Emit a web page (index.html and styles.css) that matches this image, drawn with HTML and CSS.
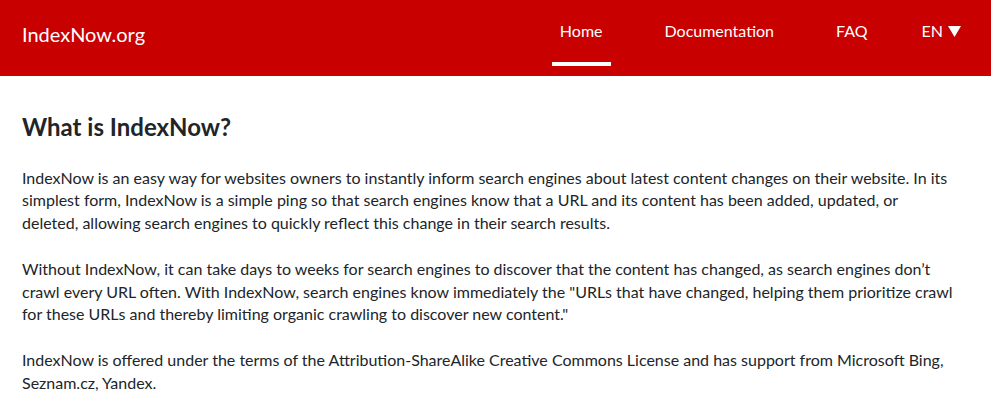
FILE: index.html
```html
<!DOCTYPE html>
<html lang="en">
<head>
<meta charset="utf-8">
<title>IndexNow.org</title>
<link rel="stylesheet" href="styles.css">
</head>
<body>
<header class="topbar">
  <a class="brand" href="#">IndexNow.org</a>
  <nav class="nav">
    <a class="nav-item active" href="#">Home</a>
    <a class="nav-item" href="#">Documentation</a>
    <a class="nav-item" href="#">FAQ</a>
    <a class="nav-item lang" href="#">EN<svg class="caret" width="13" height="11" viewBox="0 0 13 11" aria-hidden="true"><polygon points="0,0 13,0 6.5,11" fill="#fff"/></svg></a>
  </nav>
</header>
<main class="content">
  <h1 class="title">What is IndexNow?</h1>
  <p>IndexNow is an easy way for websites owners to instantly inform search engines about latest content changes on their website. In its simplest form, IndexNow is a simple ping so that search engines know that a URL and its content has been added, updated, or<br>deleted, allowing search engines to quickly reflect this change in their search results.</p>
  <p>Without IndexNow, it can take days to weeks for search engines to discover that the content has changed, as search engines don’t crawl every URL often. With IndexNow, search engines know immediately the "URLs that have changed, helping them prioritize crawl for these URLs and thereby limiting organic crawling to discover new content."</p>
  <p>IndexNow is offered under the terms of the Attribution-ShareAlike Creative Commons License and has support from Microsoft Bing, Seznam.cz, Yandex.</p>
</main>
</body>
</html>
```
FILE: styles.css
```css
* { box-sizing: border-box; }
body {
  margin: 0;
  font-family: Lato, "Open Sans", sans-serif;
  color: #212529;
  background: #fff;
}
.topbar {
  background: #c80000;
  height: 76px;
  display: flex;
  align-items: flex-start;
  justify-content: space-between;
  padding: 0 22px 0 22px;
}
.brand {
  color: #fff;
  text-decoration: none;
  font-size: 20px;
  line-height: 26px;
  padding-top: 21px;
}
.nav {
  display: flex;
  height: 76px;
}
.nav-item {
  color: #fff;
  text-decoration: none;
  font-size: 16px;
  line-height: 20px;
  height: 76px;
  padding: 21px 8px 0;
  margin-left: 46px;
  position: relative;
  display: flex;
  align-items: flex-start;
}
.nav-item.lang { margin-left: 38px; }
.nav-item.active::after {
  content: "";
  position: absolute;
  left: 0;
  right: 0;
  top: 62px;
  height: 4px;
  background: #fff;
}
.caret {
  margin-left: 5px;
  margin-top: 5px;
}
.content {
  padding: 0 22px;
}
.title {
  font-size: 24px;
  font-weight: 700;
  line-height: 30px;
  margin: 36px 0 25px;
}
.content p {
  font-size: 16px;
  line-height: 1.4;
  margin: 0 0 24px;
}
```
